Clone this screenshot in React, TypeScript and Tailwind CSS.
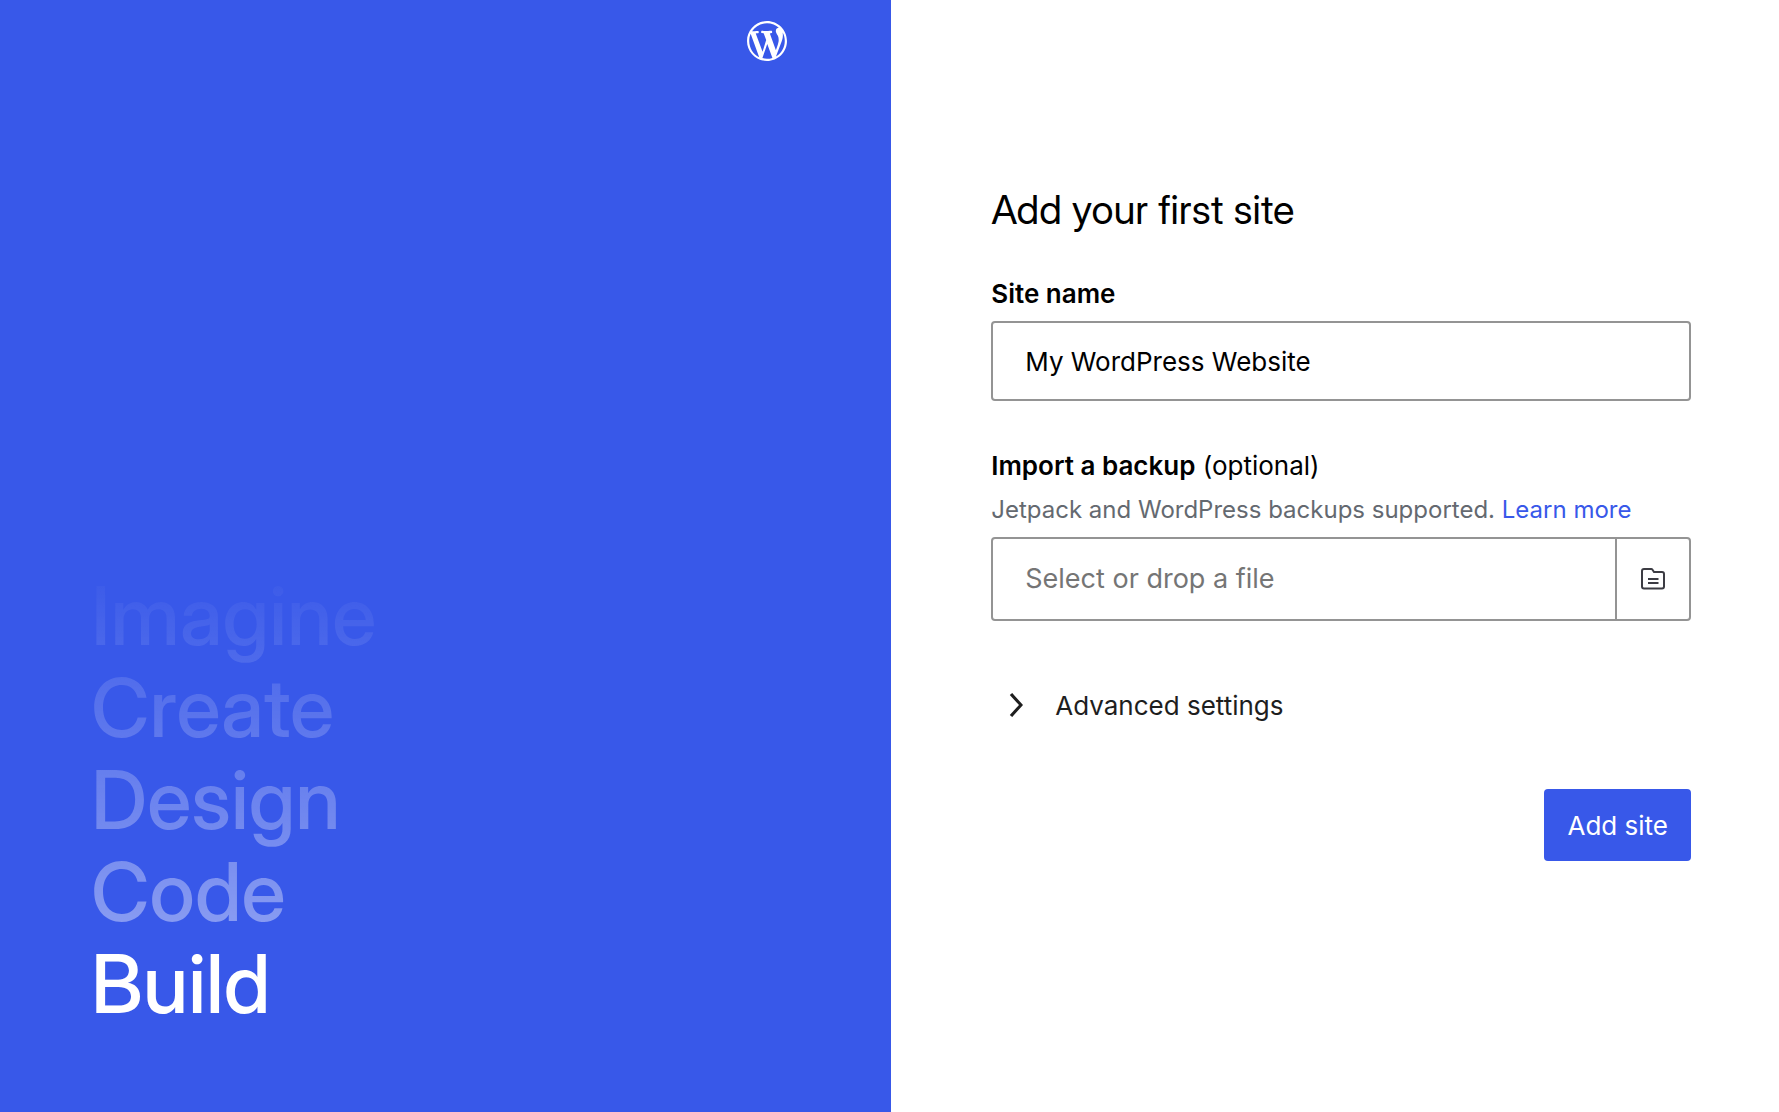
import { useState } from 'react'

const fadedWords = ['Imagine', 'Create', 'Design', 'Code']

function WordPressLogo() {
  return (
    <svg viewBox="0 0 20 20" fill="currentColor" className="w-10 h-10 text-white" aria-label="WordPress">
      <path
        fillRule="evenodd"
        d="M20 10c0-5.51-4.49-10-10-10C4.48 0 0 4.49 0 10c0 5.52 4.48 10 10 10 5.51 0 10-4.48 10-10zM7.78 15.37L4.37 6.22c.55-.02 1.17-.08 1.17-.08.5-.06.44-1.13-.06-1.11 0 0-1.45.11-2.37.11-.18 0-.37 0-.58-.01C4.12 2.69 6.87 1.11 10 1.11c2.33 0 4.45.87 6.05 2.34-.68-.11-1.65.39-1.65 1.58 0 .74.45 1.36.9 2.1.35.61.55 1.36.55 2.46 0 1.49-1.4 5-1.4 5l-3.03-8.37c.54-.02.82-.17.82-.17.5-.05.44-1.25-.06-1.22 0 0-1.44.12-2.38.12-.87 0-2.33-.12-2.33-.12-.5-.03-.56 1.2-.06 1.22l.92.08 1.26 3.41zM17.41 10c.24-.64.74-1.87.43-4.25.7 1.29 1.05 2.71 1.05 4.25 0 3.29-1.73 6.24-4.4 7.78.97-2.59 1.94-5.2 2.92-7.78zM6.1 18.09C3.12 16.65 1.11 13.53 1.11 10c0-1.3.23-2.48.72-3.59C3.25 10.3 4.67 14.2 6.1 18.09zm4.03-6.63l2.58 6.98c-.86.29-1.76.45-2.71.45-.79 0-1.57-.11-2.29-.33.81-2.38 1.62-4.74 2.42-7.1z"
      />
    </svg>
  )
}

function FolderIcon() {
  return (
    <svg viewBox="0 0 24 22" fill="none" stroke="#3c3c43" strokeWidth="2" className="w-6 h-[22px]">
      <path d="M1 3a2 2 0 0 1 2-2h7.2a1.6 1.6 0 0 1 1.3.7L13 4h8a2 2 0 0 1 2 2v12.500a2 2 0 0 1-2 2H3a2 2 0 0 1-2-2z" />
      <path d="M7 11h10.500M7 15h10.500" />
    </svg>
  )
}

function ChevronRight() {
  return (
    <svg viewBox="0 0 24 24" fill="currentColor" className="w-12 h-12">
      <path d="M10.6 6L9.4 7l4.6 5-4.6 5 1.2 1 5.4-6z" />
    </svg>
  )
}

export default function App() {
  const [siteName, setSiteName] = useState('My WordPress Website')
  const [backup, setBackup] = useState('')

  return (
    <div className="flex min-h-screen bg-white font-['Inter',sans-serif] text-black">
      {/* Intro panel */}
      <aside className="w-[50.1%] flex flex-col justify-between bg-[#3858e9] pl-[91px] pr-[104px] pt-[21px] pb-[82px]">
        <div className="flex justify-end">
          <WordPressLogo />
        </div>
        <div className="font-['Inter_Display','Inter',sans-serif] font-medium text-[81px] leading-[92px]">
          <div className="bg-linear-to-b from-white/1 to-white/42 bg-clip-text text-transparent">
            {fadedWords.map((word) => (
              <p key={word}>{word}</p>
            ))}
          </div>
          <p className="text-white">Build</p>
        </div>
      </aside>

      {/* Site form */}
      <main className="flex-1 pl-[100px] pr-[88px] pt-[186px]">
        <h1 className="font-['Inter_Display','Inter',sans-serif] text-[40px] leading-[48px]">Add your first site</h1>

        <form className="mt-11" onSubmit={(e) => e.preventDefault()}>
          <label htmlFor="site-name" className="block text-[26px] leading-8 font-semibold">
            Site name
          </label>
          <input
            id="site-name"
            type="text"
            value={siteName}
            onChange={(e) => setSiteName(e.target.value)}
            className="mt-[11px] block w-full h-20 px-8 text-[26px] bg-white border-2 border-[#949494] rounded-[4px] outline-none"
          />

          <label htmlFor="backup" className="mt-[49px] block text-[26px] leading-8">
            <span className="font-semibold">Import a backup</span> (optional)
          </label>
          <p className="mt-3 text-[24px] leading-8 text-[#646970]">
            Jetpack and WordPress backups supported.{' '}
            <a href="#learn-more" className="text-[#3858e9]">
              Learn more
            </a>
          </p>
          <div className="mt-[11px] flex h-[84px] border-2 border-[#949494] rounded-[4px]">
            <input
              id="backup"
              type="text"
              placeholder="Select or drop a file"
              value={backup}
              onChange={(e) => setBackup(e.target.value)}
              className="flex-1 min-w-0 px-8 text-[27px] bg-transparent placeholder:text-[#757575] outline-none"
            />
            <button
              type="button"
              aria-label="Choose a file"
              className="w-[74px] flex items-center justify-center border-l-2 border-[#949494]"
            >
              <FolderIcon />
            </button>
          </div>

          <button type="button" className="mt-[60px] flex items-center gap-4 text-[26px] text-[#1e1e1e]">
            <ChevronRight />
            Advanced settings
          </button>

          <div className="mt-[60px] flex justify-end">
            <button type="submit" className="h-[72px] px-[23px] text-[26px] text-white bg-[#3858e9] rounded-[4px]">
              Add site
            </button>
          </div>
        </form>
      </main>
    </div>
  )
}
